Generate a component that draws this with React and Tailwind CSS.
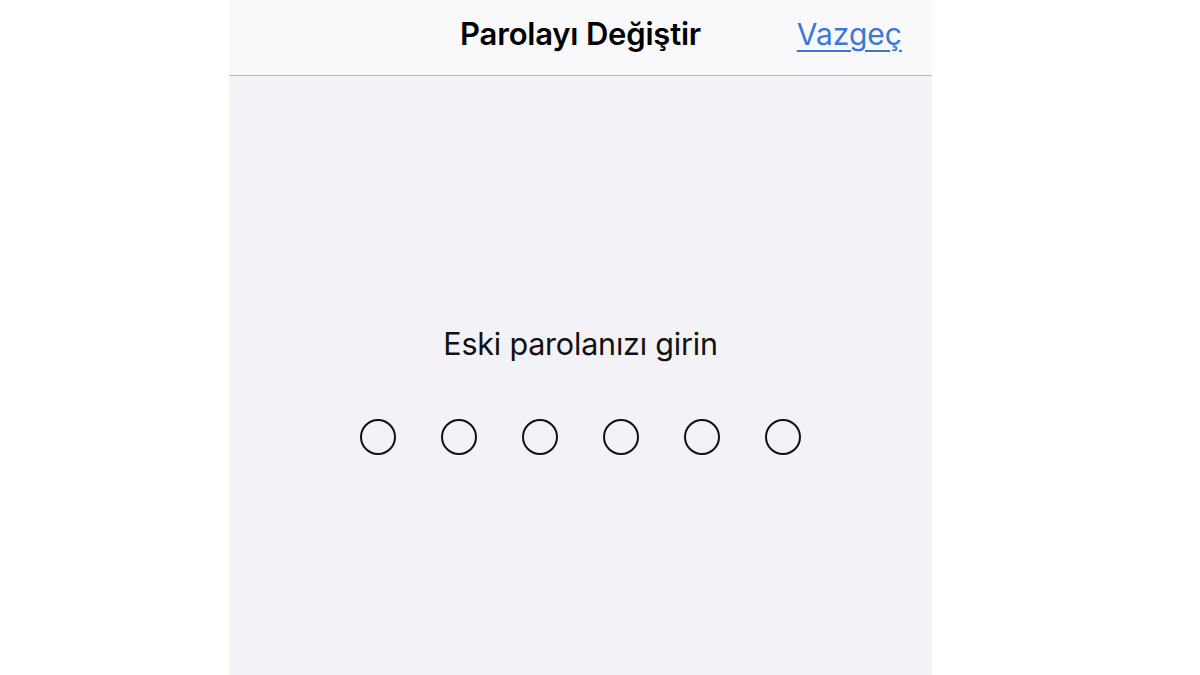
import React from "react";

const DIGITS = 6;

export default function App() {
  return (
    <div className="min-h-[675px] w-full bg-white font-['Inter',sans-serif]">
      <div className="ml-[229px] flex h-[675px] w-[703px] flex-col bg-[#f2f2f7]">
        {/* nav bar */}
        <div className="grid h-[76px] grid-cols-[1fr_auto_1fr] items-center border-b border-[#b9b9c0] bg-[#f9f9fb] pb-[8px]">
          <div />
          <h1 className="text-[31px] leading-[38px] font-semibold tracking-[-0.2px] text-black">
            Parolayı Değiştir
          </h1>
          <a className="justify-self-end pr-[30px] text-[30px] leading-[38px] text-[#3a78d6] underline decoration-[2px] underline-offset-[5px]">
            Vazgeç
          </a>
        </div>

        {/* passcode entry */}
        <div className="flex flex-col items-center pt-[250px]">
          <p className="text-[30.5px] leading-[36px] tracking-[-0.2px] text-[#111]">
            Eski parolanızı girin
          </p>
          <div className="mt-[57px] flex gap-[45px]">
            {Array.from({ length: DIGITS }).map((_, i) => (
              <span
                key={i}
                className="h-[36px] w-[36px] rounded-full border-[2px] border-[#111]"
              />
            ))}
          </div>
        </div>
      </div>
    </div>
  );
}
